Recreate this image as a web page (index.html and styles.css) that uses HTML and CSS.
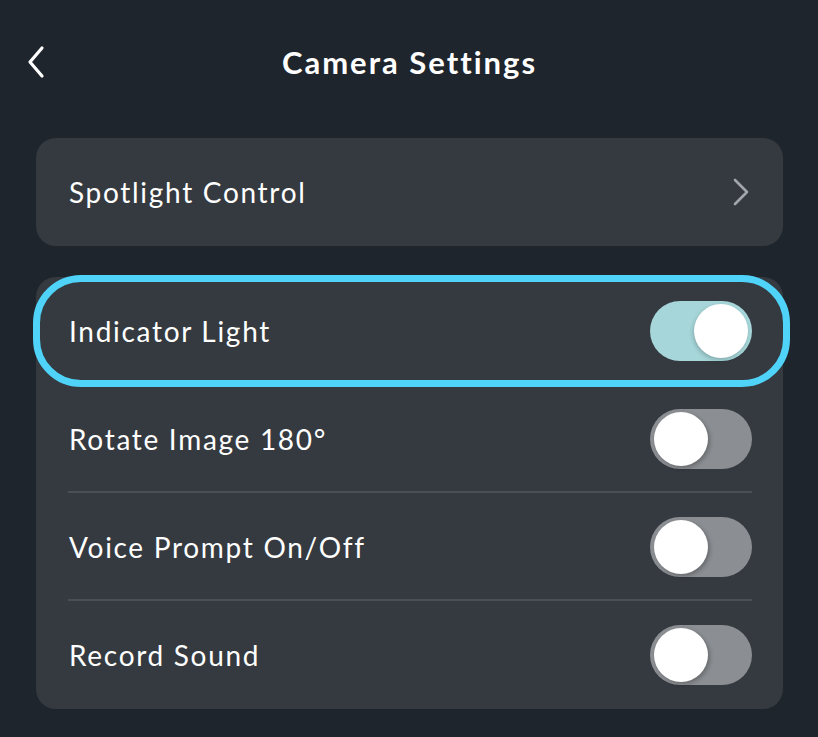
FILE: index.html
```html
<!DOCTYPE html>
<html>
<head>
<meta charset="utf-8">
<link rel="stylesheet" href="styles.css">
</head>
<body>
<div class="screen">
  <header class="topbar">
    <button class="back" aria-label="Back">
      <svg width="18" height="34" viewBox="0 0 18 34"><path d="M15 3 L3 17 L15 31" fill="none" stroke="#ffffff" stroke-width="3.2" stroke-linecap="round" stroke-linejoin="round"/></svg>
    </button>
    <h1 class="title">Camera Settings</h1>
  </header>

  <section class="card single">
    <div class="row">
      <span class="label">Spotlight Control</span>
      <svg class="chev" width="18" height="28" viewBox="0 0 18 28"><path d="M3 2 L15 14 L3 26" fill="none" stroke="#a3a6aa" stroke-width="2.6" stroke-linecap="round" stroke-linejoin="round"/></svg>
    </div>
  </section>

  <section class="card list">
    <div class="row highlighted">
      <span class="label">Indicator Light</span>
      <span class="toggle on"><span class="knob"></span></span>
    </div>
    <div class="row sep">
      <span class="label">Rotate Image 180°</span>
      <span class="toggle"><span class="knob"></span></span>
    </div>
    <div class="row sep">
      <span class="label">Voice Prompt On/Off</span>
      <span class="toggle"><span class="knob"></span></span>
    </div>
    <div class="row">
      <span class="label">Record Sound</span>
      <span class="toggle"><span class="knob"></span></span>
    </div>
  </section>
</div>
</body>
</html>
```

FILE: styles.css
```css
* { box-sizing: border-box; }
html, body {
  margin: 0;
  padding: 0;
  background: #1f252c;
  width: 818px;
  height: 737px;
  overflow: hidden;
}
body {
  font-family: "Lato", "Open Sans", sans-serif;
  color: #ffffff;
}
.screen {
  display: flex;
  flex-direction: column;
  padding: 32px 35px 0 36px;
}
.topbar {
  position: relative;
  height: 60px;
  display: flex;
  align-items: center;
  justify-content: center;
  margin-bottom: 46px;
}
.back {
  position: absolute;
  left: -9px;
  top: 13px;
  background: none;
  border: 0;
  padding: 0;
  width: 18px;
  height: 34px;
  display: block;
}
.back svg { display: block; }
.title {
  margin: 0;
  font-size: 31px;
  font-weight: 700;
  letter-spacing: 2px;
  line-height: 60px;
}
.card {
  background: #353a40;
  border-radius: 20px;
}
.single { margin-bottom: 31px; }
.row {
  height: 108px;
  display: flex;
  align-items: center;
  justify-content: space-between;
  padding: 0 31px 0 33px;
  position: relative;
}
.label {
  font-size: 28px;
  font-weight: 400;
  letter-spacing: 1.7px;
}
.chev { display: block; margin-right: 2px; }
.sep::after {
  content: "";
  position: absolute;
  left: 32px;
  right: 31px;
  bottom: 0;
  height: 2px;
  background: #4a4f55;
}
.highlighted::before {
  content: "";
  position: absolute;
  top: -2px;
  bottom: -2px;
  left: -3px;
  right: -7px;
  border: 7px solid #4fd3f8;
  border-radius: 48px;
  pointer-events: none;
}
.toggle {
  width: 102px;
  height: 60px;
  border-radius: 30px;
  background: #8b8e92;
  display: flex;
  align-items: center;
  padding: 0 4px;
}
.toggle.on {
  background: #a6d6d9;
  justify-content: flex-end;
}
.knob {
  width: 54px;
  height: 54px;
  border-radius: 50%;
  background: #ffffff;
  box-shadow: 2px 2px 4px rgba(0,0,0,0.25);
}
.toggle.on .knob {
  box-shadow: -1px 2px 4px rgba(0,0,0,0.2);
}
```
